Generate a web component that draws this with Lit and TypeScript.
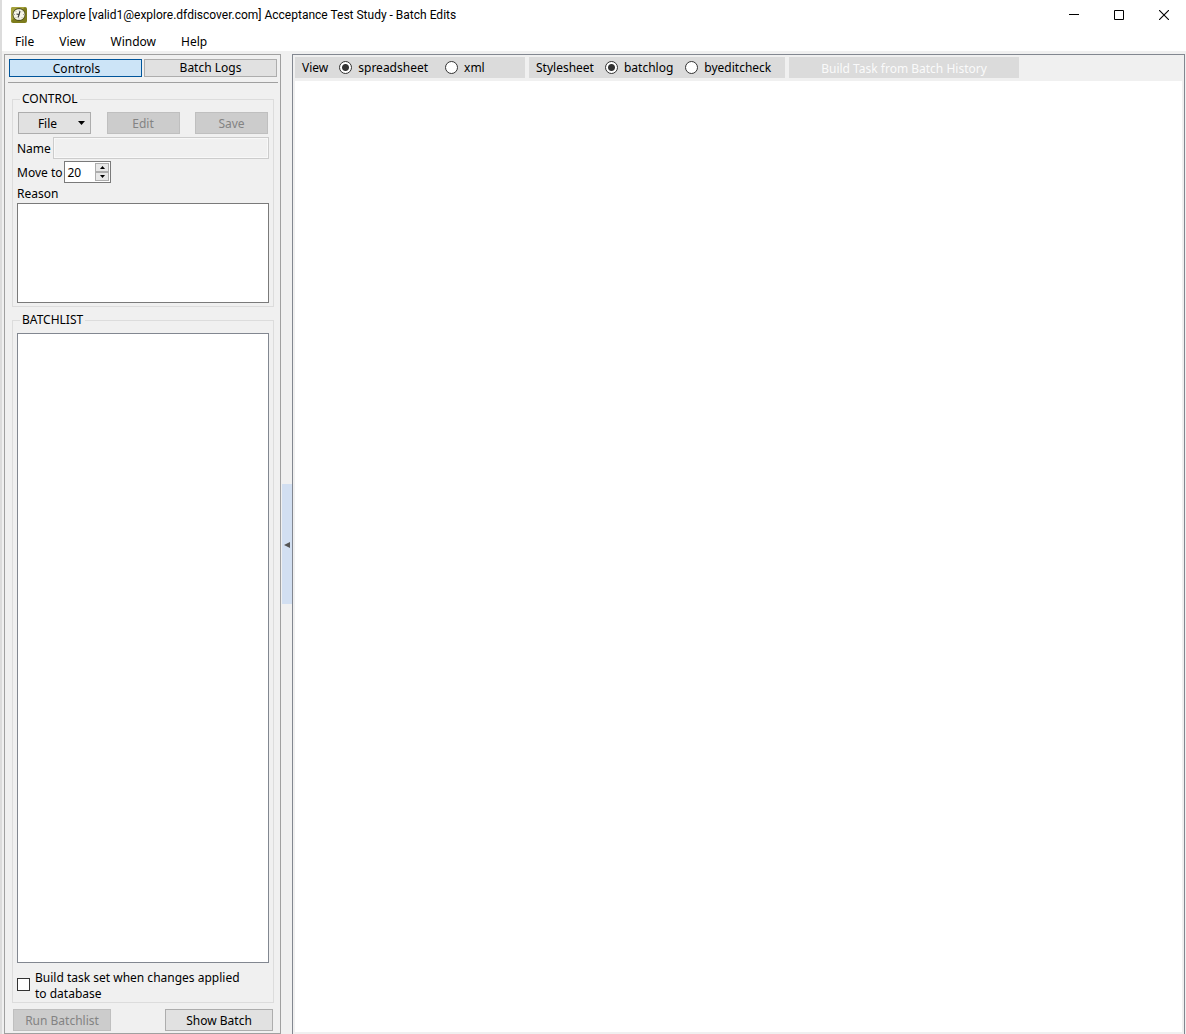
import { LitElement, html, css, svg } from "lit";
import { customElement, state } from "lit/decorators.js";

@customElement("app-root")
export class AppRoot extends LitElement {
  static styles = css`
    :host {
      display: block;
      color: #000;
      font: 12px/16px "Noto Sans", Tahoma, sans-serif;
    }
    * {
      box-sizing: border-box;
    }
    button,
    input,
    textarea {
      font: inherit;
      color: inherit;
      margin: 0;
      padding: 0;
      border-radius: 0;
    }
    .window {
      display: flex;
      flex-direction: column;
      height: 100vh;
      min-height: 480px;
      border-left: 2px solid #dcdcdc;
      background: #f0f0f0;
    }
    .titlebar {
      display: flex;
      align-items: center;
      height: 30px;
      padding-left: 9px;
      background: #fff;
      font-family: Roboto, "Segoe UI", sans-serif;
    }
    .title {
      flex: 1;
      margin: 0 0 0 5px;
      font-size: 12px;
      font-weight: 400;
      white-space: nowrap;
    }
    .caption {
      display: grid;
      place-items: center;
      width: 45px;
      height: 30px;
      border: 0;
      background: none;
    }
    .logo,
    .glyph {
      display: block;
    }
    .menubar {
      display: flex;
      gap: 25px;
      height: 21px;
      padding: 4px 0 0 13px;
      background: #fff;
    }
    .menu {
      border: 0;
      background: none;
      height: 16px;
    }
    .body {
      flex: 1;
      display: flex;
      min-height: 0;
      padding: 3px 1px 0 2px;
    }
    .side {
      flex: none;
      display: flex;
      flex-direction: column;
      width: 277px;
      border: 1px solid #a0a0a0;
      padding: 4px 2px 2px 3px;
    }
    .tabs {
      display: grid;
      grid-template-columns: 1fr 1fr;
      gap: 2px;
      padding: 0 1px 5px;
      border-bottom: 1px solid #a0a0a0;
    }
    .tab {
      height: 18px;
      border: 1px solid #adadad;
      background: #e1e1e1;
      line-height: 16px;
    }
    .tab.on {
      border-color: #00559b;
      background: #cce4f7;
      padding: 2px 0 0 2px;
      line-height: 14px;
    }
    .group {
      margin: 8px 4px 0;
      padding: 0 4px 3px;
      border: 1px solid #dcdcdc;
      min-width: 0;
    }
    .group.fill {
      flex: 1;
      display: flex;
      flex-direction: column;
      min-height: 0;
      margin-top: 5px;
      padding-bottom: 0;
    }
    .legend {
      padding: 0 2px;
      margin-left: 3px;
    }
    .row {
      display: flex;
      align-items: center;
      gap: 2px;
      margin-top: 2px;
    }
    .row label {
      padding-top: 2px;
    }
    .buttons {
      display: flex;
      justify-content: space-between;
      padding: 5px 1px 1px;
    }
    .btn {
      position: relative;
      height: 22px;
      border: 1px solid #adadad;
      background: #e1e1e1;
      padding-top: 2px;
      line-height: 18px;
    }
    .btn:disabled {
      border-color: #bfbfbf;
      background: #ccc;
      color: #838383;
    }
    .buttons .btn {
      width: 73px;
    }
    .btn.drop {
      padding-right: 14px;
    }
    .drop .glyph {
      position: absolute;
      right: 5px;
      top: 8px;
    }
    .name {
      flex: 1;
      min-width: 0;
      height: 22px;
      border: 1px solid #ccc;
      outline: 1px solid #f8f8f8;
      outline-offset: -2px;
      background: #f0f0f0;
      padding: 0 3px;
    }
    .spin {
      display: flex;
      width: 47px;
      height: 22px;
      border: 1px solid #7a7a7a;
      background: #fff;
      padding: 1px;
    }
    .spin input {
      flex: 1;
      min-width: 0;
      border: 0;
      outline: 0;
      padding: 2px 0 0 1px;
      background: none;
      appearance: textfield;
    }
    .spin input::-webkit-inner-spin-button {
      appearance: none;
    }
    .steps {
      display: grid;
      grid-template-rows: 9px 9px;
    }
    .step {
      display: grid;
      place-items: center;
      width: 14px;
      border: 1px solid #adadad;
      background: #e8e8e8;
    }
    .reason-label {
      display: block;
      margin: 3px 0 1px;
    }
    .reason {
      display: block;
      width: 100%;
      height: 100px;
      border: 1px solid #7a7a7a;
      outline: 0;
      background: #fff;
      resize: none;
      padding: 2px 4px;
    }
    .list {
      flex: 1;
      margin: 5px 0 7px;
      border: 1px solid #828790;
      background: #fff;
      overflow: auto;
    }
    .check {
      display: flex;
      align-items: center;
      gap: 5px;
    }
    .check input {
      flex: none;
      appearance: none;
      width: 13px;
      height: 13px;
      margin-bottom: 4px;
      border: 1px solid #333;
      background: #fff;
    }
    .check input:checked {
      box-shadow: inset 0 0 0 2px #fff;
      background: #333;
    }
    .check-text {
      max-width: 216px;
    }
    .actions {
      display: flex;
      justify-content: space-between;
      margin: 6px 5px 0;
    }
    .run {
      width: 98px;
    }
    .show {
      width: 108px;
    }
    .splitter {
      flex: none;
      display: grid;
      align-items: center;
      width: 11px;
      padding-left: 1px;
    }
    .handle {
      display: grid;
      place-items: center;
      width: 10px;
      height: 120px;
      border: 0;
      padding-top: 2px;
      background: #d2dff1;
    }
    .main {
      flex: 1;
      display: flex;
      flex-direction: column;
      min-width: 0;
      border: 1px solid #828790;
      border-bottom: 0;
      padding: 2px;
    }
    .toolbar {
      display: flex;
      gap: 4px;
      padding-bottom: 3px;
      white-space: nowrap;
    }
    .segment {
      display: flex;
      align-items: center;
      height: 21px;
      padding: 0 7px;
      background: #dbdbdb;
    }
    .view {
      width: 230px;
    }
    .style {
      width: 256px;
    }
    .seg-label {
      margin-right: 11px;
    }
    .radio {
      display: flex;
      align-items: center;
      gap: 6px;
      margin-right: 17px;
    }
    .style .radio {
      margin-right: 12px;
    }
    .radio input {
      appearance: none;
      width: 13px;
      height: 13px;
      margin-bottom: 1px;
      border: 1px solid #333;
      border-radius: 50%;
      background: #fff;
    }
    .radio input:checked {
      background: radial-gradient(circle, #333 0 3px, #fff 4px);
    }
    .build {
      width: 230px;
      height: 21px;
      border: 0;
      background: #dbdbdb;
      color: #fafafa;
      padding-top: 2px;
    }
    .sheet {
      flex: 1;
      background: #fff;
      overflow: auto;
    }
  `;

  @state() private tab = "Controls";
  @state() private moveTo = 20;
  @state() private viewMode = "spreadsheet";
  @state() private sheetStyle = "batchlog";

  private arrow(points: string, w: number, h: number, fill = "#000") {
    return html`<svg class="glyph" width=${w} height=${h} viewBox="0 0 ${w} ${h}" aria-hidden="true">
      ${svg`<path d=${points} fill=${fill} />`}
    </svg>`;
  }

  private radio(name: string, value: string, current: string, pick: (v: string) => void) {
    return html`<label class="radio">
      <input type="radio" name=${name} .checked=${value === current} @change=${() => pick(value)} />
      <span>${value}</span>
    </label>`;
  }

  render() {
    return html`
      <div class="window">
        <header class="titlebar">
          <svg class="logo" width="16" height="16" viewBox="0 0 16 16" aria-hidden="true">
            <rect width="16" height="16" rx="2" fill="#7d7c1c" />
            <path d="M0 2Q0 0 2 0H14L0 14Z" fill="#a5a23c" />
            <circle cx="8" cy="7.5" r="6.5" fill="#4c4d20" />
            <circle cx="8" cy="7.5" r="5.6" fill="#f5f5e6" />
            <path d="M8 2.5v1M8 11.5v1M3 7.5h1M12 7.5h1M4.5 4l.7.7M11.5 4l-.7.7M4.5 11l.7-.7M11.5 11l-.7-.7" stroke="#888" stroke-width=".8" />
            <path d="M9 4L8 8L7 10.500M5.500 7L8 7.500" fill="none" stroke="#333" stroke-width="1.1" />
          </svg>
          <h1 class="title">DFexplore [valid1@explore.dfdiscover.com] Acceptance Test Study - Batch Edits</h1>
          <button class="caption" aria-label="Minimize">
            <svg class="glyph" width="10" height="10" viewBox="0 0 10 10"><path d="M0 4h10v1H0z" /></svg>
          </button>
          <button class="caption" aria-label="Maximize">
            <svg class="glyph" width="10" height="10" viewBox="0 0 10 10"><path d="M.5.5h9v9h-9z" fill="none" stroke="#000" /></svg>
          </button>
          <button class="caption" aria-label="Close">
            <svg class="glyph" width="10" height="10" viewBox="0 0 10 10"><path d="M0 0L10 10M10 0L0 10" stroke="#000" stroke-width="1.1" /></svg>
          </button>
        </header>
        <nav class="menubar">
          ${["File", "View", "Window", "Help"].map((m) => html`<button class="menu">${m}</button>`)}
        </nav>
        <div class="body">
          <aside class="side">
            <div class="tabs">
              ${["Controls", "Batch Logs"].map(
                (t) => html`<button class="tab ${t === this.tab ? "on" : ""}" @click=${() => (this.tab = t)}>${t}</button>`
              )}
            </div>
            <fieldset class="group">
              <legend class="legend">CONTROL</legend>
              <div class="buttons">
                <button class="btn drop">File${this.arrow("M0 0h7L3.5 4z", 7, 4)}</button>
                <button class="btn" disabled>Edit</button>
                <button class="btn" disabled>Save</button>
              </div>
              <div class="row">
                <label for="name">Name</label>
                <input id="name" class="name" type="text" readonly />
              </div>
              <div class="row">
                <label for="move">Move to</label>
                <div class="spin">
                  <input
                    id="move"
                    type="number"
                    .value=${String(this.moveTo)}
                    @input=${(e: Event) => (this.moveTo = Number((e.target as HTMLInputElement).value))}
                  />
                  <div class="steps">
                    <button class="step" aria-label="Increase" @click=${() => this.moveTo++}>
                      ${this.arrow("M0 3L2.5 0L5 3z", 5, 3)}
                    </button>
                    <button class="step" aria-label="Decrease" @click=${() => this.moveTo--}>
                      ${this.arrow("M0 0L2.5 3L5 0z", 5, 3)}
                    </button>
                  </div>
                </div>
              </div>
              <label class="reason-label" for="reason">Reason</label>
              <textarea id="reason" class="reason"></textarea>
            </fieldset>
            <fieldset class="group fill">
              <legend class="legend">BATCHLIST</legend>
              <div class="list" role="listbox" aria-label="Batches"></div>
              <label class="check">
                <input type="checkbox" />
                <span class="check-text">Build task set when changes applied to database</span>
              </label>
            </fieldset>
            <div class="actions">
              <button class="btn run" disabled>Run Batchlist</button>
              <button class="btn show">Show Batch</button>
            </div>
          </aside>
          <div class="splitter">
            <button class="handle" aria-label="Collapse panel">${this.arrow("M0 3L6 0V6z", 6, 6, "#555")}</button>
          </div>
          <main class="main">
            <div class="toolbar">
              <div class="segment view" role="radiogroup" aria-label="View">
                <span class="seg-label">View</span>
                ${["spreadsheet", "xml"].map((v) => this.radio("view", v, this.viewMode, (x) => (this.viewMode = x)))}
              </div>
              <div class="segment style" role="radiogroup" aria-label="Stylesheet">
                <span class="seg-label">Stylesheet</span>
                ${["batchlog", "byeditcheck"].map((v) =>
                  this.radio("style", v, this.sheetStyle, (x) => (this.sheetStyle = x))
                )}
              </div>
              <button class="build" disabled>Build Task from Batch History</button>
            </div>
            <section class="sheet" aria-label="Results"></section>
          </main>
        </div>
      </div>
    `;
  }
}
